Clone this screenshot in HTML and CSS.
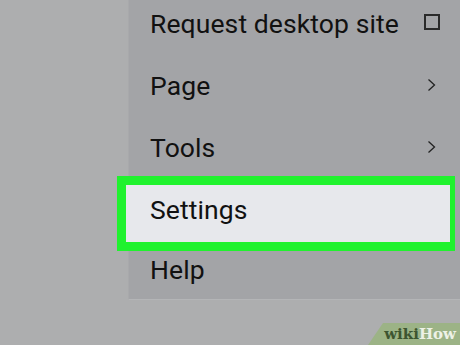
FILE: index.html
```html
<!DOCTYPE html>
<html lang="en">

<head>
    <meta charset="UTF-8">
    <meta name="viewport" content="width=device-width, initial-scale=1.0">
    <title>Browser menu - Settings</title>
    <link rel="stylesheet" href="styles.css">
</head>

<body>
    <div class="screen">
        <div class="menu">
            <div class="menu-item">
                <span>Request desktop site</span>
                <span class="checkbox"></span>
            </div>
            <div class="menu-item">
                <span>Page</span>
                <svg class="chevron" width="9" height="14" viewBox="0 0 9 14"><path d="M1.5 1.5 L7.5 7 L1.5 12.5" fill="none" stroke="#222" stroke-width="1.3"/></svg>
            </div>
            <div class="menu-item">
                <span>Tools</span>
                <svg class="chevron" width="9" height="14" viewBox="0 0 9 14"><path d="M1.5 1.5 L7.5 7 L1.5 12.5" fill="none" stroke="#222" stroke-width="1.3"/></svg>
            </div>
            <div class="menu-item selected">
                <span>Settings</span>
            </div>
            <div class="menu-item last">
                <span>Help</span>
            </div>
        </div>
    </div>

    <div class="wikihow"><span class="wiki">wiki</span><span class="how">How</span></div>
</body>

</html>
```

FILE: styles.css
```css
body {
    margin: 0;
    padding: 0;
    width: 460px;
    height: 345px;
    overflow: hidden;
    background: #adaeaf;
    font-family: 'Roboto', sans-serif;
    color: #111;
    position: relative;
}

.screen {
    display: flex;
    justify-content: flex-end;
}

.menu {
    width: 331px;
    height: 299px;
    background: #a3a4a7;
    box-shadow: 0 1px 0 #b4b5b7, -1px 0 0 #a8a9ab;
    display: flex;
    flex-direction: column;
}

.menu-item {
    height: 62px;
    flex-shrink: 0;
    display: flex;
    align-items: center;
    justify-content: space-between;
    padding: 0 20px 0 21px;
    font-size: 26.5px;
    letter-spacing: 0.1px;
    box-sizing: border-box;
}

.menu-item:first-child {
    margin-top: -8px;
}

.menu-item.last {
    height: 59px;
}

.menu-item.selected {
    height: 75px;
    margin: -2px 5px -11px -12px;
    border: 9px solid #20f22e;
    border-right-width: 5px;
    background: #e7e8ec;
    padding: 0 0 9px 24px;
    position: relative;
}

.checkbox {
    width: 16px;
    height: 16px;
    box-sizing: border-box;
    border: 2px solid #2a2a2a;
    margin-top: -2px;
}

.chevron {
    margin-right: 4px;
}

.wikihow {
    position: absolute;
    right: 0;
    bottom: 0;
    width: 92px;
    height: 22px;
    background: #9cb386;
    clip-path: polygon(15px 0, 100% 0, 100% 100%, 0 100%);
    font-family: 'DejaVu Serif', serif;
    font-weight: bold;
    font-size: 15px;
    line-height: 22px;
    text-align: right;
    padding-right: 4px;
    box-sizing: border-box;
}

.wiki {
    color: #3d5530;
}

.how {
    color: #edf1e6;
}
```
